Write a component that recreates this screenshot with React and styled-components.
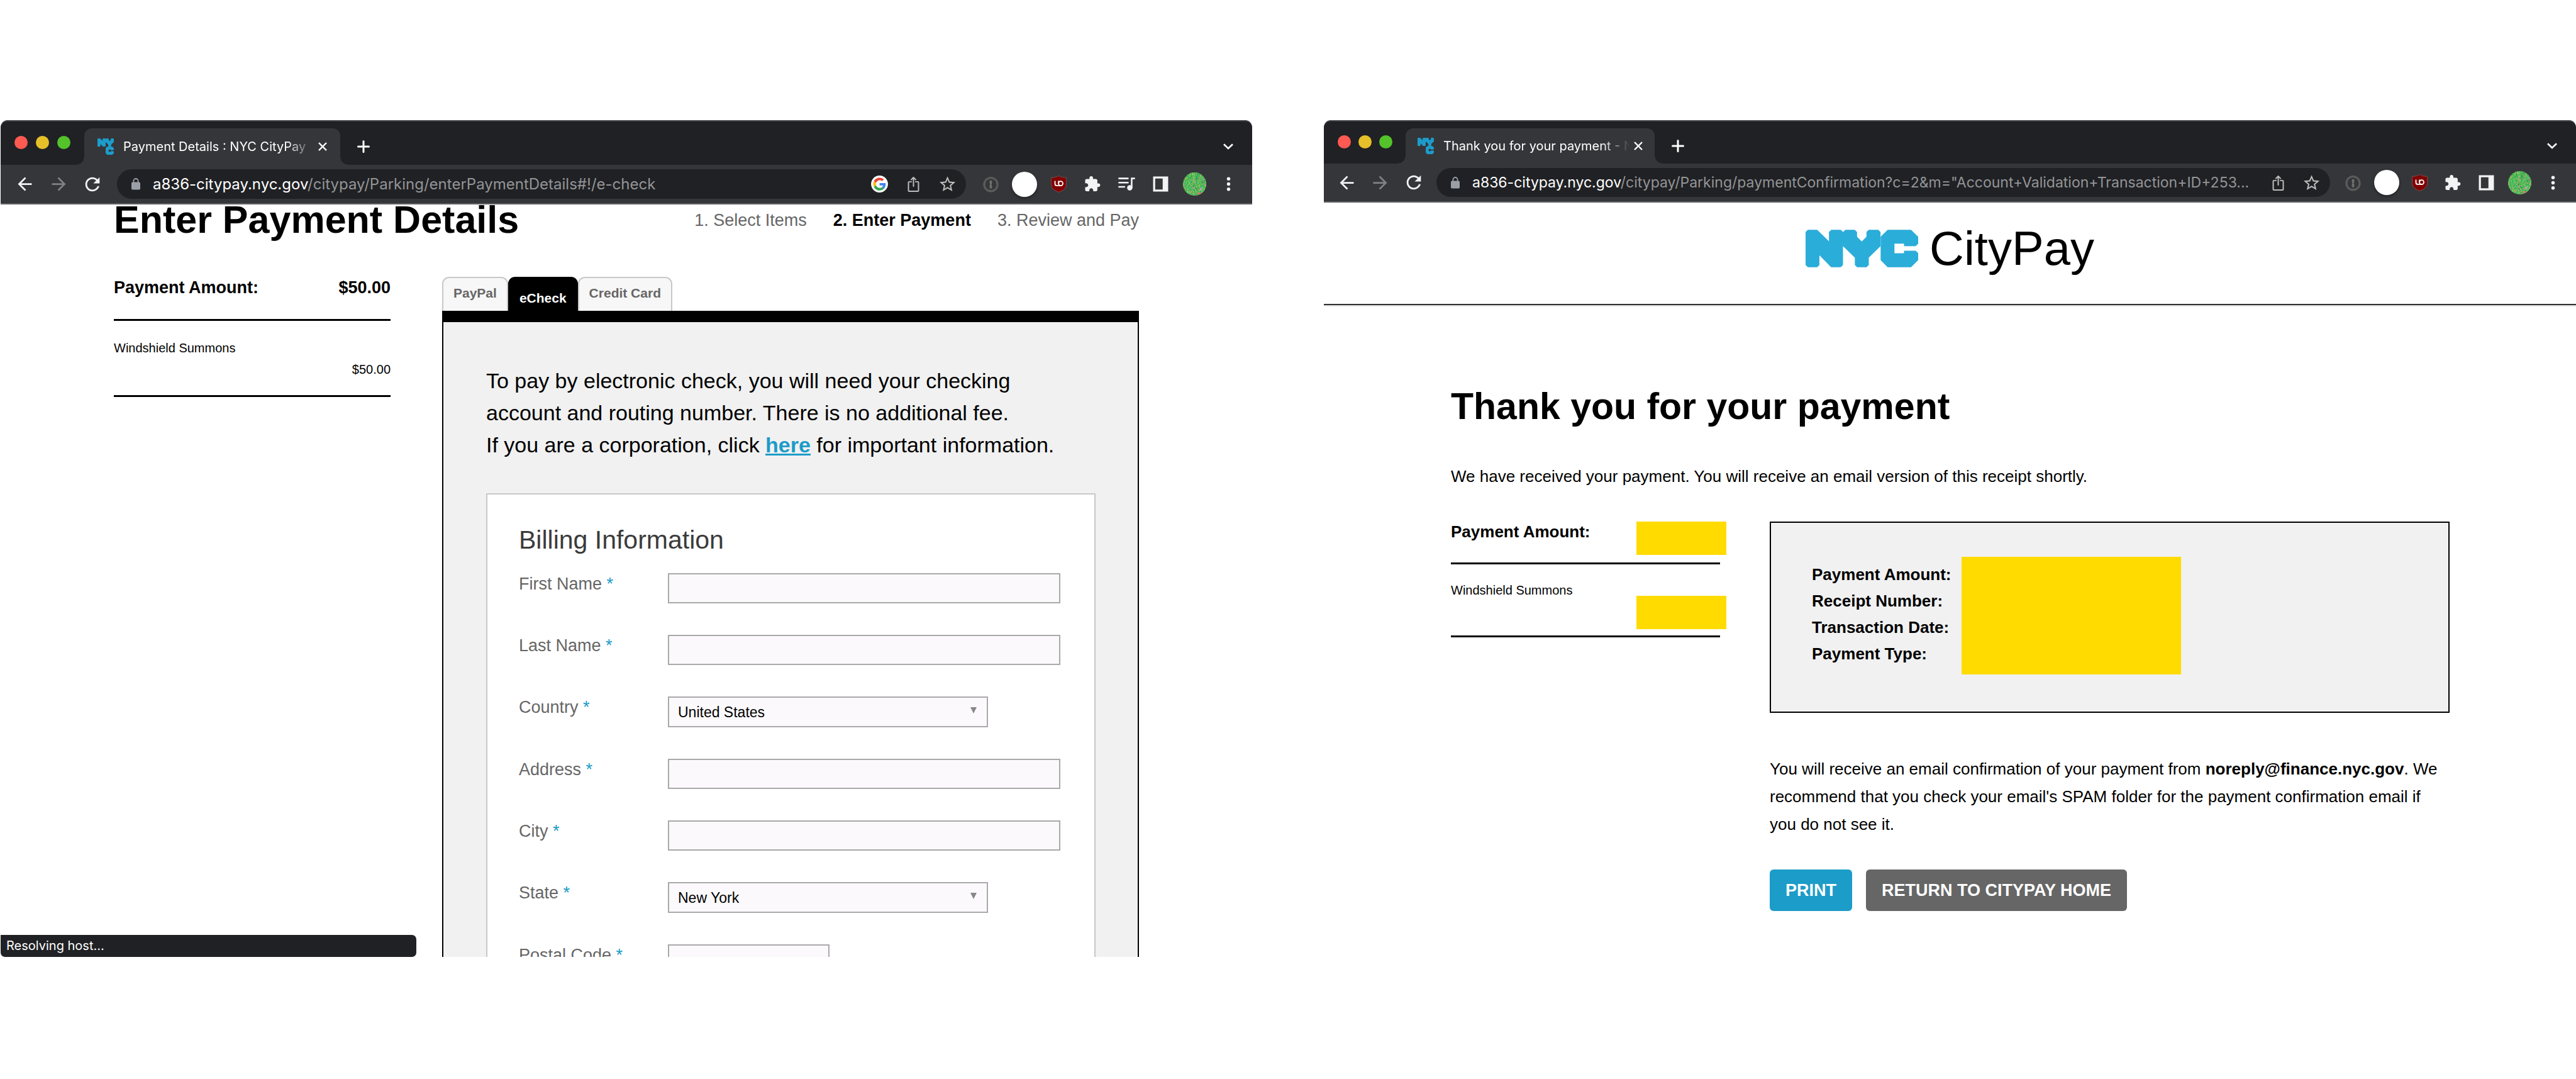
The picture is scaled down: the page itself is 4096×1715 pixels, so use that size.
import React from 'react';
import styled, { createGlobalStyle, css, ThemeProvider } from 'styled-components';

const helvetica = '"Liberation Sans", Arial, sans-serif';
const system = 'Inter, Roboto, sans-serif';

const wideChrome = {
  strip: 71, tab: 58, tabWidth: 407, tabPad: 21, lightGap: 13, lightsWidth: 133,
  toolbar: 61, cell: 54, edge: 11, gap: 12, omnibox: 47, url: 24,
};
const compactChrome = {
  strip: 69, tab: 56, tabWidth: 396, tabPad: 19, lightGap: 12, lightsWidth: 130,
  toolbar: 60, cell: 53, edge: 10, gap: 10, omnibox: 46, url: 23,
};

const GlobalStyle = createGlobalStyle`
  *, *::before, *::after { box-sizing: border-box; }
  body { margin: 0; background: #fff; color: #000; font-family: ${helvetica}; }
  h1, h2, p, ol, ul { margin: 0; padding: 0; }
  button, input, select { font: inherit; margin: 0; }
`;

const Desktop = styled.div`
  display: grid;
  grid-template-columns: 1990fr 1991fr;
  column-gap: 114px;
  height: 100vh;
  padding: 191px 0 194px 1px;
`;

const BrowserWindow = styled.section`
  position: relative;
  display: flex;
  flex-direction: column;
  min-width: 0;
  min-height: 0;
  overflow: hidden;
  background: #fff;
  border-radius: 11px 11px 0 0;
`;

/* ---------- browser chrome ---------- */

const TabStrip = styled.div`
  display: flex;
  align-items: flex-end;
  flex: none;
  height: ${(p) => p.theme.strip}px;
  background: #202124;
  box-shadow: inset 0 2px 0 #434447;
  border-radius: 11px 11px 0 0;
`;

const Lights = styled.div`
  display: flex;
  align-self: center;
  gap: ${(p) => p.theme.lightGap}px;
  width: ${(p) => p.theme.lightsWidth}px;
  padding-left: 22px;
`;

const Light = styled.button`
  width: 21px;
  height: 21px;
  padding: 0;
  border: 0;
  border-radius: 50%;
  background: ${(p) => p.$color};
`;

const Tab = styled.div`
  position: relative;
  display: flex;
  align-items: center;
  width: ${(p) => p.theme.tabWidth}px;
  height: ${(p) => p.theme.tab}px;
  padding: 0 ${(p) => p.theme.tabPad}px;
  border-radius: 12px 12px 0 0;
  background: #35363a;

  &::before, &::after {
    content: '';
    position: absolute;
    bottom: 0;
    width: 12px;
    height: 12px;
  }
  &::before {
    left: -12px;
    background: radial-gradient(circle at 0 0, transparent 11px, #35363a 12px);
  }
  &::after {
    right: -12px;
    background: radial-gradient(circle at 100% 0, transparent 11px, #35363a 12px);
  }
`;

const TabTitle = styled.span`
  flex: 1;
  min-width: 0;
  margin: 0 6px 0 15px;
  overflow: hidden;
  white-space: nowrap;
  color: #fff;
  font: 20px/28px ${system};
  mask-image: linear-gradient(to right, #000 calc(100% - 46px), transparent);
`;

const PlainButton = styled.button`
  display: flex;
  align-items: center;
  justify-content: center;
  padding: 0;
  border: 0;
  background: none;
  color: ${(p) => p.$color || '#fff'};
`;

const NewTab = styled(PlainButton)`
  height: ${(p) => p.theme.tab}px;
  margin-left: 27px;
`;

const TabSearch = styled(NewTab)`
  margin-left: auto;
  margin-right: 30px;
`;

const Toolbar = styled.div`
  display: flex;
  align-items: center;
  flex: none;
  height: ${(p) => p.theme.toolbar + 2}px;
  padding: 0 ${(p) => p.theme.edge}px;
  background: #35363a;
  border-bottom: 2px solid #5f6165;
`;

const Cell = styled(PlainButton)`
  width: ${(p) => p.theme.cell}px;
  height: ${(p) => p.theme.cell - 8}px;
  flex: none;
`;

const Omnibox = styled.div`
  display: flex;
  align-items: center;
  flex: 1;
  min-width: 0;
  height: ${(p) => p.theme.omnibox}px;
  margin: 0 ${(p) => p.theme.gap}px;
  padding: 0 3px 0 23px;
  border-radius: 24px;
  background: #202124;
`;

const Address = styled.div`
  flex: 1;
  min-width: 0;
  margin-left: 20px;
  overflow: hidden;
  white-space: nowrap;
  color: #939497;
  font: ${(p) => p.theme.url}px/32px ${system};
`;

const Host = styled.span`
  color: #fff;
`;

const BlankBadge = styled.span`
  width: 40px;
  height: 40px;
  border-radius: 50%;
  background: #fff;
  box-shadow: 0 2px 4px rgba(0, 0, 0, 0.4);
`;

const StatusBubble = styled.div`
  position: absolute;
  left: 0;
  bottom: 0;
  width: 661px;
  height: 35px;
  padding-left: 9px;
  border-radius: 0 7px 7px 7px;
  background: #202124;
  color: #fff;
  font: 20px/34px ${system};
`;

/* ---------- drawings ---------- */

const Icon = ({ children, size = 29 }) => (
  <svg width={size} height={size} viewBox="0 0 160 160" aria-hidden="true">{children}</svg>
);

const Material = ({ d, size = 33 }) => (
  <svg width={size} height={size} viewBox="0 0 24 24" fill="currentColor" aria-hidden="true"><path d={d} /></svg>
);

const BACK = 'M20 11H7.83l5.59-5.59L12 4l-8 8 8 8 1.41-1.41L7.83 13H20v-2z';
const FORWARD = 'M4 11h12.17l-5.59-5.59L12 4l8 8-8 8-1.41-1.41L16.17 13H4v-2z';
const RELOAD = 'M17.65 6.35C16.2 4.9 14.21 4 12 4c-4.42 0-7.99 3.58-7.99 8s3.57 8 7.99 8c3.73 0 6.84-2.55 7.73-6h-2.08c-.82 2.33-3.04 4-5.65 4-3.31 0-6-2.69-6-6s2.69-6 6-6c1.66 0 3.14.69 4.22 1.78L13 11h7V4l-2.35 2.35z';

const NyMark = 'M20 0H101L203 100V20L223 0H306L326 20L346 0H427L447 20V60L488 102L529 60V20L549 0H631L651 20V142L549 242V306L529 326H448L428 306V242L325 142V306L305 326H222L120 222V306L101 326H20L0 306V20Z';
const CMark = 'M713 0H916L978 60V122L956 142H855V121H772V204H855V182H956L978 202V264L916 326H713L652 264V60Z';

const Favicon = () => (
  <svg width="26" height="26" viewBox="0 0 652 652" fill="#1c9ccb" aria-hidden="true">
    <path d={NyMark} />
    <path d={CMark} transform="translate(-326 326)" />
  </svg>
);

const NycLogo = () => (
  <svg width="179" height="60" viewBox="0 0 978 326" fill="#2badd9" role="img" aria-label="NYC">
    <path d={NyMark} />
    <path d={CMark} />
  </svg>
);

const CloseIcon = () => (
  <svg width="14" height="14" viewBox="0 0 14 14" stroke="currentColor" strokeWidth="2.4" aria-hidden="true">
    <path d="M1 1L13 13M13 1L1 13" />
  </svg>
);

const PlusIcon = () => (
  <svg width="20" height="20" viewBox="0 0 20 20" stroke="currentColor" strokeWidth="3" strokeLinecap="round" aria-hidden="true">
    <path d="M10 1.5V18.5M1.5 10H18.5" />
  </svg>
);

const ChevronIcon = () => (
  <svg width="16" height="10" viewBox="0 0 16 10" fill="none" stroke="currentColor" strokeWidth="2.6" aria-hidden="true">
    <path d="M1 1.2L8 8L15 1.2" />
  </svg>
);

const LockIcon = () => (
  <svg width="14" height="19" viewBox="0 0 14 19" aria-hidden="true">
    <path d="M3.4 8V4.6a3.6 3.6 0 0 1 7.2 0V8" fill="none" stroke="#9aa0a6" strokeWidth="1.8" />
    <rect x="0" y="6.6" width="14" height="12" rx="1.8" fill="#9aa0a6" />
  </svg>
);

const GoogleIcon = () => (
  <Icon>
    <circle cx="80" cy="80" r="74" fill="#fff" />
    <g transform="translate(25 25) scale(2.32)">
      <path fill="#EA4335" d="M24 9.5c3.54 0 6.71 1.22 9.21 3.6l6.85-6.85C35.9 2.38 30.47 0 24 0 14.62 0 6.51 5.38 2.56 13.22l7.98 6.19C12.43 13.72 17.74 9.5 24 9.5z" />
      <path fill="#4285F4" d="M46.98 24.55c0-1.57-.15-3.09-.38-4.55H24v9.02h12.94c-.58 2.96-2.26 5.48-4.78 7.18l7.73 6c4.51-4.18 7.09-10.36 7.09-17.65z" />
      <path fill="#FBBC05" d="M10.53 28.59c-.48-1.45-.76-2.99-.76-4.59s.27-3.14.76-4.59l-7.98-6.19C.92 16.46 0 20.12 0 24c0 3.88.92 7.54 2.56 10.78l7.97-6.19z" />
      <path fill="#34A853" d="M24 48c6.48 0 11.93-2.13 15.89-5.81l-7.73-6c-2.15 1.45-4.92 2.3-8.16 2.3-6.26 0-11.57-4.22-13.47-9.91l-7.98 6.19C6.51 42.62 14.62 48 24 48z" />
    </g>
  </Icon>
);

const ShareIcon = () => (
  <Icon>
    <g fill="none" stroke="#bdbdbd" strokeWidth="11" strokeLinecap="round" strokeLinejoin="round">
      <path d="M61 60H42Q36 60 36 66V138Q36 144 42 144H118Q124 144 124 138V66Q124 60 118 60H99" />
      <path d="M80 99V22M60 42L80 22L100 42" />
    </g>
  </Icon>
);

const StarIcon = () => (
  <Icon>
    <path
      transform="translate(-3 -2) scale(6.95)"
      fill="#bdbdbd"
      d="M22 9.24l-7.19-.62L12 2 9.19 8.63 2 9.24l5.46 4.73L5.82 21 12 17.27 18.18 21l-1.63-7.03L22 9.24zM12 15.4l-3.76 2.27 1-4.28-3.32-2.88 4.38-.38L12 6.1l1.71 4.04 4.38.38-3.32 2.88 1 4.28L12 15.4z"
    />
  </Icon>
);

const KeyholeIcon = () => (
  <Icon>
    <circle cx="80" cy="84" r="61" fill="#36373a" stroke="#595a59" strokeWidth="13" />
    <circle cx="80" cy="84" r="53" fill="none" stroke="#84857f" strokeWidth="3" />
    <path d="M70 50H90V76L84 84L90 92V119H70V92L74 84L70 76Z" fill="#6f706d" />
  </Icon>
);

const ShieldIcon = () => (
  <Icon>
    <path d="M80 8Q104 25 146 25V86Q146 128 80 152Q14 128 14 86V25Q56 25 80 8Z" fill="#800000" stroke="#8f5a5c" strokeWidth="4" />
    <g fill="none" stroke="#fff" strokeWidth="10">
      <path d="M47 52V78Q47 93 62 93H97" />
      <path d="M78 52V76" />
      <circle cx="97" cy="75" r="19" />
    </g>
  </Icon>
);

const PuzzleIcon = () => (
  <Icon>
    <path
      transform="translate(1 5) scale(6.3)"
      fill="#f1f3f4"
      d="M20.5 11H19V7c0-1.1-.9-2-2-2h-4V3.5C13 2.12 11.88 1 10.5 1S8 2.12 8 3.5V5H4c-1.1 0-1.99.9-1.99 2v3.8H3.5c1.49 0 2.7 1.21 2.7 2.7s-1.21 2.7-2.7 2.7H2V20c0 1.1.9 2 2 2h3.8v-1.5c0-1.49 1.21-2.7 2.7-2.7 1.49 0 2.7 1.21 2.7 2.7V22H17c1.1 0 2-.9 2-2v-4h1.5c1.38 0 2.5-1.12 2.5-2.5S21.88 11 20.5 11z"
    />
  </Icon>
);

const MusicIcon = () => (
  <Icon>
    <g fill="none" stroke="#f1f3f4" strokeWidth="14" strokeLinecap="round">
      <path d="M13 31H91M13 68H91M13 105H60" />
      <path d="M124 113V31H147" />
    </g>
    <circle cx="107" cy="113" r="23" fill="#f1f3f4" />
  </Icon>
);

const PanelIcon = () => (
  <Icon>
    <path fill="#f1f3f4" fillRule="evenodd" d="M14 14H146V146H14ZM32 32V128H98V32Z" />
  </Icon>
);

const DotsIcon = () => (
  <Icon>
    <g fill="#f1f3f4">
      <circle cx="80" cy="34" r="15" />
      <circle cx="80" cy="80" r="15" />
      <circle cx="80" cy="126" r="15" />
    </g>
  </Icon>
);

const MEADOW = ['#2f9e4f', '#57c553', '#8cc75a', '#2fb36a', '#7fae4e', '#3bd07a', '#b0b45a', '#2a8f6b', '#5fd95a', '#c9967d', '#46a37c'];
const pseudo = (n) => {
  const v = Math.sin(n * 12.9898) * 43758.5453;
  return v - Math.floor(v);
};
const blades = Array.from({ length: 700 }, (_, i) => ({
  x: Math.floor(pseudo(i + 1) * 37) * 3,
  y: Math.floor(pseudo(i + 1001) * 37) * 3,
  h: 3 + Math.floor(pseudo(i + 2001) * 3) * 3,
  c: MEADOW[Math.floor(pseudo(i + 3001) * MEADOW.length)],
}));

const AvatarPicture = () => (
  <svg width="37" height="37" viewBox="0 0 111 111" role="img" aria-label="Profile">
    <clipPath id="avatarRound"><circle cx="55.5" cy="55.5" r="55.5" /></clipPath>
    <g clipPath="url(#avatarRound)">
      <rect width="111" height="111" fill="#4fb954" />
      {blades.map((b, i) => <rect key={i} x={b.x} y={b.y} width="3" height={b.h} fill={b.c} />)}
      <rect x="82" y="74" width="7" height="12" fill="#d69ae0" />
      <rect x="72" y="96" width="14" height="7" fill="#ef6a72" />
      <rect x="94" y="41" width="8" height="4" fill="#ef6a60" />
    </g>
  </svg>
);

/* ---------- browser frame ---------- */

function Browser({ metrics, title, host, path, search, media, status, children }) {
  return (
    <ThemeProvider theme={metrics}>
      <BrowserWindow>
        <TabStrip>
          <Lights>
            <Light $color="#ff5a52" aria-label="Close window" />
            <Light $color="#e6c029" aria-label="Minimize window" />
            <Light $color="#53c22b" aria-label="Zoom window" />
          </Lights>
          <Tab>
            <Favicon />
            <TabTitle>{title}</TabTitle>
            <PlainButton aria-label="Close tab"><CloseIcon /></PlainButton>
          </Tab>
          <NewTab aria-label="New tab"><PlusIcon /></NewTab>
          <TabSearch aria-label="Search tabs"><ChevronIcon /></TabSearch>
        </TabStrip>
        <Toolbar>
          <Cell aria-label="Back" $color="#f1f3f4"><Material d={BACK} /></Cell>
          <Cell aria-label="Forward" $color="#808184"><Material d={FORWARD} /></Cell>
          <Cell aria-label="Reload" $color="#f1f3f4"><Material d={RELOAD} size={34} /></Cell>
          <Omnibox>
            <LockIcon />
            <Address><Host>{host}</Host>{path}</Address>
            {search && <Cell aria-label="Search with Google"><GoogleIcon /></Cell>}
            <Cell aria-label="Share"><ShareIcon /></Cell>
            <Cell aria-label="Bookmark"><StarIcon /></Cell>
          </Omnibox>
          <Cell aria-label="Password manager"><KeyholeIcon /></Cell>
          <Cell aria-label="Extension"><BlankBadge /></Cell>
          <Cell aria-label="Ad blocker"><ShieldIcon /></Cell>
          <Cell aria-label="Extensions"><PuzzleIcon /></Cell>
          {media && <Cell aria-label="Media controls"><MusicIcon /></Cell>}
          <Cell aria-label="Side panel"><PanelIcon /></Cell>
          <Cell aria-label="Profile"><AvatarPicture /></Cell>
          <Cell aria-label="Menu"><DotsIcon /></Cell>
        </Toolbar>
        {children}
        {status && <StatusBubble role="status">{status}</StatusBubble>}
      </BrowserWindow>
    </ThemeProvider>
  );
}

/* ---------- payment details page ---------- */

const DetailsPage = styled.main`
  flex: 1;
  min-height: 0;
  overflow: hidden;
  padding: 0 180px;
`;

const TitleRow = styled.header`
  display: flex;
  justify-content: space-between;
  margin-bottom: 65px;
`;

const PageTitle = styled.h1`
  font-size: 61px;
  line-height: 48px;
`;

const Steps = styled.ol`
  display: flex;
  gap: 42px;
  list-style: none;
  color: #666;
  font-size: 27px;
  line-height: 50px;
`;

const Step = styled.li`
  ${(p) => p.$current && css`
    color: #000;
    font-weight: bold;
  `}
`;

const DetailsColumns = styled.div`
  display: grid;
  grid-template-columns: 440px 1fr;
  column-gap: 82px;
  align-items: start;
`;

const SummaryTotal = styled.div`
  display: flex;
  justify-content: space-between;
  padding-bottom: 33px;
  border-bottom: 3px solid #000;
  font-size: 27px;
  font-weight: bold;
  line-height: 34px;
`;

const SummaryItem = styled.div`
  display: flex;
  flex-direction: column;
  padding: 26px 0 24px;
  border-bottom: 3px solid #000;
  font-size: 20px;
  line-height: 34px;
`;

const ItemAmount = styled.span`
  align-self: flex-end;
`;

const MethodTabs = styled.div`
  display: flex;
`;

const MethodTab = styled.button`
  display: flex;
  align-items: flex-start;
  height: 54px;
  padding: 11px 16px 0;
  border: 2px solid #c8c8c8;
  border-bottom: 0;
  border-radius: 11px 11px 0 0;
  background: #f7f7f7;
  color: #666;
  font-size: 21px;
  font-weight: bold;
  line-height: 26px;

  ${(p) => p.$active && css`
    padding-top: 19px;
    border-color: #000;
    background: #000;
    color: #fff;
  `}
`;

const MethodPanel = styled.section`
  padding: 68px 67px 120px 68px;
  border: 2px solid #000;
  border-top-width: 18px;
  background: #f1f1f1;
`;

const Intro = styled.div`
  margin-bottom: 51px;
  padding-right: 40px;
  font-size: 34px;
  line-height: 51px;
`;

const InlineLink = styled.a`
  color: #1c9cc8;
  font-weight: bold;
`;

const BillingCard = styled.form`
  padding: 48px 54px 80px 50px;
  border: 2px solid #c8c8c8;
  background: #fff;
`;

const CardTitle = styled.h2`
  margin-bottom: 29px;
  color: #3b3b3b;
  font-size: 41px;
  font-weight: normal;
  line-height: 48px;
`;

const Field = styled.div`
  display: grid;
  grid-template-columns: 237px 1fr;
  align-items: start;
  margin-bottom: 50px;
`;

const FieldLabel = styled.label`
  color: #666;
  font-size: 27px;
  line-height: 34px;
`;

const Required = styled.span`
  color: #1c9cc8;
`;

const controlLook = css`
  display: block;
  border: 2px solid #a9a9a9;
  border-radius: 0;
  background: #fbf9fb;
  color: #000;
  font-size: 23px;
`;

const TextInput = styled.input`
  ${controlLook}
  width: ${(p) => (p.$short ? '257px' : '100%')};
  height: 48px;
  padding: 0 14px;
`;

const SelectWrap = styled.div`
  position: relative;
  width: 509px;

  &::after {
    content: '';
    position: absolute;
    top: 17px;
    right: 18px;
    border: 5px solid transparent;
    border-top: 10px solid #888;
    border-bottom: 0;
    pointer-events: none;
  }
`;

const SelectBox = styled.select`
  ${controlLook}
  appearance: none;
  width: 100%;
  height: 49px;
  padding: 0 14px;
`;

function FormField({ id, label, options, short }) {
  return (
    <Field>
      <FieldLabel htmlFor={id}>{label} <Required>*</Required></FieldLabel>
      {options ? (
        <SelectWrap>
          <SelectBox id={id} defaultValue={options[0]}>
            {options.map((o) => <option key={o}>{o}</option>)}
          </SelectBox>
        </SelectWrap>
      ) : <TextInput id={id} type="text" $short={short} />}
    </Field>
  );
}

function PaymentDetails() {
  return (
    <DetailsPage>
      <TitleRow>
        <PageTitle>Enter Payment Details</PageTitle>
        <Steps>
          <Step>1. Select Items</Step>
          <Step $current>2. Enter Payment</Step>
          <Step>3. Review and Pay</Step>
        </Steps>
      </TitleRow>
      <DetailsColumns>
        <aside>
          <SummaryTotal><span>Payment Amount:</span><span>$50.00</span></SummaryTotal>
          <SummaryItem><span>Windshield Summons</span><ItemAmount>$50.00</ItemAmount></SummaryItem>
        </aside>
        <div>
          <MethodTabs>
            <MethodTab>PayPal</MethodTab>
            <MethodTab $active>eCheck</MethodTab>
            <MethodTab>Credit Card</MethodTab>
          </MethodTabs>
          <MethodPanel>
            <Intro>
              <p>To pay by electronic check, you will need your checking account and routing number. There is no additional fee.</p>
              <p>If you are a corporation, click <InlineLink href="#corporation">here</InlineLink> for important information.</p>
            </Intro>
            <BillingCard>
              <CardTitle>Billing Information</CardTitle>
              <FormField id="firstName" label="First Name" />
              <FormField id="lastName" label="Last Name" />
              <FormField id="country" label="Country" options={['United States']} />
              <FormField id="address" label="Address" />
              <FormField id="city" label="City" />
              <FormField id="state" label="State" options={['New York']} />
              <FormField id="postalCode" label="Postal Code" short />
            </BillingCard>
          </MethodPanel>
        </div>
      </DetailsColumns>
    </DetailsPage>
  );
}

/* ---------- confirmation page ---------- */

const ConfirmationPage = styled.div`
  flex: 1;
  min-height: 0;
  overflow: hidden;
`;

const SiteHeader = styled.header`
  display: flex;
  align-items: flex-start;
  justify-content: center;
  gap: 18px;
  height: 163px;
  padding-top: 43px;
  border-bottom: 2px solid #2f2f31;
  box-shadow: 0 2px 0 #dedede;
`;

const SiteName = styled.span`
  font-size: 76px;
  line-height: 60px;
`;

const Receipt = styled.main`
  padding: 125px 201px 0 202px;
`;

const ThankYou = styled.h1`
  margin-bottom: 53px;
  font-size: 59px;
  line-height: 72px;
`;

const Copy = styled.p`
  font-size: 26px;
  line-height: 44px;
`;

const ReceiptColumns = styled.div`
  display: grid;
  grid-template-columns: 428px 1fr;
  column-gap: 79px;
  align-items: start;
  margin-top: 50px;
`;

const Redacted = styled.span`
  flex: none;
  width: 143px;
  height: 53px;
  margin-right: -10px;
  background: #ffdb00;
`;

const PaidTotal = styled.div`
  display: flex;
  justify-content: space-between;
  padding-bottom: 12px;
  border-bottom: 3px solid #000;
  font-size: 26px;
  font-weight: bold;
  line-height: 32px;
`;

const PaidItem = styled.div`
  display: flex;
  justify-content: space-between;
  align-items: flex-end;
  height: 116px;
  padding-bottom: 10px;
  border-bottom: 3px solid #000;
  font-size: 20px;
`;

const PaidName = styled.span`
  align-self: flex-start;
  padding-top: 24px;
  line-height: 34px;
`;

const ReceiptBox = styled.section`
  display: flex;
  padding: 54px 65px 59px;
  border: 2px solid #000;
  background: #f1f1f1;
`;

const ReceiptLabels = styled.ul`
  width: 238px;
  padding-top: 7px;
  list-style: none;
  font-size: 26px;
  font-weight: bold;
  line-height: 42px;
`;

const RedactedBlock = styled.div`
  width: 349px;
  height: 187px;
  background: #ffdb00;
`;

const EmailNote = styled(Copy)`
  margin: 67px 0 50px;
  padding-right: 10px;
`;

const Actions = styled.div`
  display: flex;
  gap: 22px;
`;

const Action = styled.button`
  height: 66px;
  padding: 0 25px;
  border: 0;
  border-radius: 6px;
  background: ${(p) => (p.$primary ? '#1c9cc8' : '#666')};
  color: #fff;
  font-size: 27px;
  font-weight: bold;
`;

function Confirmation() {
  return (
    <ConfirmationPage>
      <SiteHeader>
        <NycLogo />
        <SiteName>CityPay</SiteName>
      </SiteHeader>
      <Receipt>
        <ThankYou>Thank you for your payment</ThankYou>
        <Copy>We have received your payment. You will receive an email version of this receipt shortly.</Copy>
        <ReceiptColumns>
          <aside>
            <PaidTotal><span>Payment Amount:</span><Redacted /></PaidTotal>
            <PaidItem><PaidName>Windshield Summons</PaidName><Redacted /></PaidItem>
          </aside>
          <div>
            <ReceiptBox>
              <ReceiptLabels>
                <li>Payment Amount:</li>
                <li>Receipt Number:</li>
                <li>Transaction Date:</li>
                <li>Payment Type:</li>
              </ReceiptLabels>
              <RedactedBlock />
            </ReceiptBox>
            <EmailNote>
              You will receive an email confirmation of your payment from <b>noreply@finance.nyc.gov</b>. We
              recommend that you check your email's SPAM folder for the payment confirmation email if
              you do not see it.
            </EmailNote>
            <Actions>
              <Action $primary>PRINT</Action>
              <Action>RETURN TO CITYPAY HOME</Action>
            </Actions>
          </div>
        </ReceiptColumns>
      </Receipt>
    </ConfirmationPage>
  );
}

export default function App() {
  return (
    <>
      <GlobalStyle />
      <Desktop>
        <Browser
          metrics={wideChrome}
          title="Payment Details : NYC CityPay"
          host="a836-citypay.nyc.gov"
          path="/citypay/Parking/enterPaymentDetails#!/e-check"
          status="Resolving host..."
          search
          media
        >
          <PaymentDetails />
        </Browser>
        <Browser
          metrics={compactChrome}
          title="Thank you for your payment - N"
          host="a836-citypay.nyc.gov"
          path={'/citypay/Parking/paymentConfirmation?c=2&m="Account+Validation+Transaction+ID+253...'}
        >
          <Confirmation />
        </Browser>
      </Desktop>
    </>
  );
}
